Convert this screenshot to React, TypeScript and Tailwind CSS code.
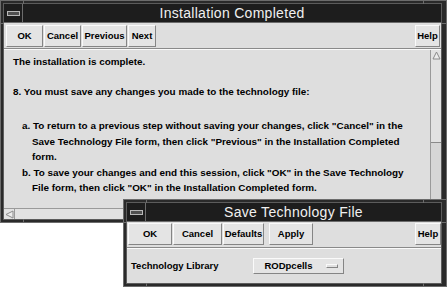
import React from "react";

const Btn: React.FC<{ label: string; className?: string }> = ({ label, className = "" }) => (
  <div
    className={`flex h-[22px] items-center justify-center border border-t-[#fafafa] border-l-[#fafafa] border-b-[#858585] border-r-[#858585] bg-[#e4e4e4] text-[9.5px] font-bold text-black ${className}`}
  >
    {label}
  </div>
);

const Frame: React.FC<{ title: string; className?: string; children: React.ReactNode }> = ({
  title,
  className = "",
  children,
}) => (
  <div
    className={`flex flex-col border border-[#6c6c6c] bg-[#2a2a2a] pt-[2px] pb-[2px] pl-[2px] pr-[4px] ${className}`}
  >
    {/* resize corner marks */}
    <span className="absolute -top-px left-[22px] h-[4px] w-px bg-[#6c6c6c]" />
    <span className="absolute -top-px right-[22px] h-[4px] w-px bg-[#6c6c6c]" />
    <span className="absolute -bottom-px left-[22px] h-[4px] w-px bg-[#6c6c6c]" />
    <span className="absolute -bottom-px right-[22px] h-[4px] w-px bg-[#6c6c6c]" />
    <span className="absolute top-[22px] -left-px h-px w-[4px] bg-[#6c6c6c]" />
    <span className="absolute top-[22px] -right-px h-px w-[6px] bg-[#6c6c6c]" />
    <div className="flex flex-1 flex-col border border-[#5c5c5c]">
      <div className="flex h-[19px] border-b border-[#6c6c6c] bg-[#1d1d1d]">
        <div className="flex w-[19px] items-center justify-center border-r border-[#6c6c6c]">
          <div className="h-[5px] w-[13px] border border-[#b8b8b8] bg-[#505050]" />
        </div>
        <div className="flex flex-1 items-center justify-center text-[14px] leading-none tracking-[0.3px] text-[#f0f0f0]">
          {title}
        </div>
      </div>
      <div className="flex flex-1 flex-col overflow-hidden bg-[#dedede]">{children}</div>
    </div>
  </div>
);

const Separator: React.FC = () => <div className="h-[2px] border-t border-b border-t-[#8a8a8a] border-b-[#fafafa]" />;

const App: React.FC = () => {
  return (
    <div className="relative h-[287px] w-[447px] overflow-hidden bg-white [font-family:'Liberation_Sans',Arial,sans-serif]">
      <Frame title="Installation Completed" className="relative h-[223px] w-[447px]">
        <div className="flex h-[25px] gap-[1px] pt-[2px] pl-[2px] pr-[1px]">
          <Btn label="OK" className="w-[37px]" />
          <Btn label="Cancel" className="w-[37px]" />
          <Btn label="Previous" className="w-[45px]" />
          <Btn label="Next" className="w-[28px]" />
          <Btn label="Help" className="ml-auto w-[25px]" />
        </div>
        <Separator />
        <div className="flex flex-1">
          <div className="flex-1 whitespace-nowrap pt-[4px] text-[9.9px] font-bold leading-[15.5px] text-black">
            <div className="pl-[9px]">The installation is complete.</div>
            <div className="mt-[14.5px] pl-[9px]">8. You must save any changes you made to the technology file:</div>
            <div className="mt-[18.5px] pl-[18px]">
              a. To return to a previous step without saving your changes, click "Cancel" in the
            </div>
            <div className="pl-[28px]">Save Technology File form, then click "Previous" in the Installation Completed</div>
            <div className="pl-[28px]">form.</div>
            <div className="pl-[18px]">b. To save your changes and end this session, click "OK" in the Save Technology</div>
            <div className="pl-[28px]">File form, then click "OK" in the Installation Completed form.</div>
          </div>
          <div className="flex w-[11px] flex-col border-l border-[#9a9a9a] bg-[#d6d6d6]">
            <div className="flex h-[11px] items-center justify-center bg-[#e2e2e2]">
              <svg width="9" height="9" viewBox="0 0 9 9">
                <polygon points="4.5,1 8,8 1,8" fill="#ececec" stroke="#8a8a8a" strokeWidth="1" />
              </svg>
            </div>
            <div className="h-[82px] border-b border-[#8a8a8a] bg-[#e2e2e2]" />
          </div>
        </div>
        <div className="flex h-[11px] border-t border-[#9a9a9a] bg-[#e2e2e2]">
          <div className="flex w-[11px] items-center justify-center border-r border-[#9a9a9a]">
            <svg width="9" height="9" viewBox="0 0 9 9">
              <polygon points="1,4.5 8,1 8,8" fill="#ececec" stroke="#8a8a8a" strokeWidth="1" />
            </svg>
          </div>
          <div className="flex-1" />
        </div>
      </Frame>

      <Frame title="Save Technology File" className="absolute top-[199px] left-[123px] h-[88px] w-[324px]">
        <div className="flex h-[25px] gap-[1px] pt-[1px] pl-[1px]">
          <Btn label="OK" className="w-[44px]" />
          <Btn label="Cancel" className="w-[49px]" />
          <Btn label="Defaults" className="w-[41px]" />
          <Btn label="Apply" className="ml-[4px] w-[44px]" />
          <Btn label="Help" className="ml-auto w-[26px]" />
        </div>
        <Separator />
        <div className="flex flex-1 items-center pl-[4px]">
          <span className="text-[9.5px] font-bold text-black">Technology Library</span>
          <div className="ml-[35px] flex h-[16px] w-[91px] items-center border border-t-[#fafafa] border-l-[#fafafa] border-b-[#858585] border-r-[#858585] bg-[#e4e4e4] pl-[10px]">
            <span className="text-[9.5px] font-bold text-black">RODpcells</span>
            <div className="ml-[13px] h-[4px] w-[12px] border border-t-[#fafafa] border-l-[#fafafa] border-b-[#858585] border-r-[#858585] bg-[#e0e0e0]" />
          </div>
        </div>
      </Frame>
    </div>
  );
};

export default App;
